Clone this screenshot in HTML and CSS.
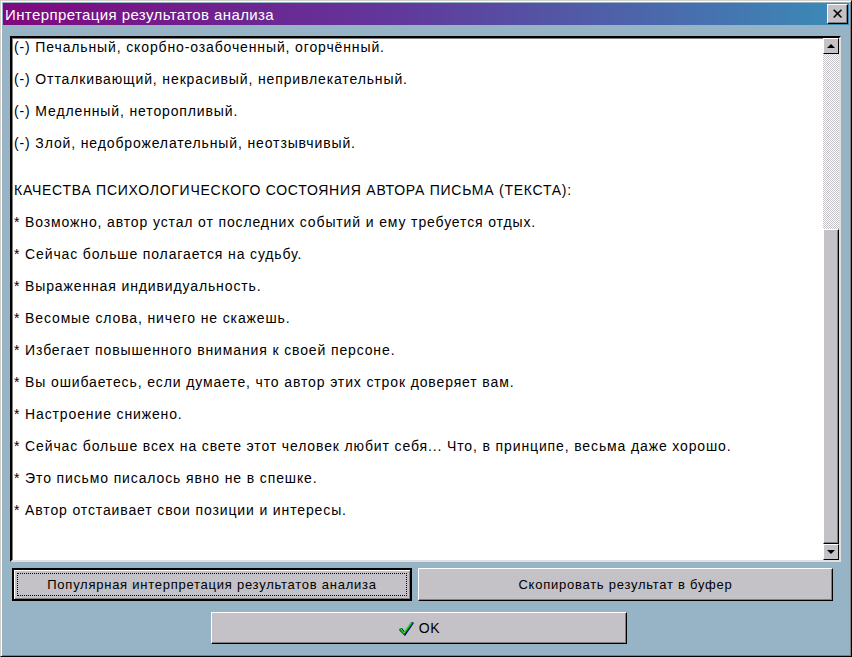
FILE: index.html
```html
<!DOCTYPE html>
<html lang="ru">
<head>
  <meta charset="UTF-8" />
  <title>Интерпретация результатов анализа</title>
  <link rel="stylesheet" href="styles.css">
</head>
<body>

  <div class="window">
    <div class="titlebar">
      <span class="title">Интерпретация результатов анализа</span>
      <button class="close-btn">&#10005;</button>
    </div>

    <div class="client">
      <div class="textbox">
        <div class="text">
          <p>(-) Печальный, скорбно-озабоченный, огорчённый.</p>
          <p>(-) Отталкивающий, некрасивый, непривлекательный.</p>
          <p>(-) Медленный, неторопливый.</p>
          <p>(-) Злой, недоброжелательный, неотзывчивый.</p>
          <p class="heading">КАЧЕСТВА ПСИХОЛОГИЧЕСКОГО СОСТОЯНИЯ АВТОРА ПИСЬМА (ТЕКСТА):</p>
          <p>* Возможно, автор устал от последних событий и ему требуется отдых.</p>
          <p>* Сейчас больше полагается на судьбу.</p>
          <p>* Выраженная индивидуальность.</p>
          <p>* Весомые слова, ничего не скажешь.</p>
          <p>* Избегает повышенного внимания к своей персоне.</p>
          <p>* Вы ошибаетесь, если думаете, что автор этих строк доверяет вам.</p>
          <p>* Настроение снижено.</p>
          <p>* Сейчас больше всех на свете этот человек любит себя... Что, в принципе, весьма даже хорошо.</p>
          <p>* Это письмо писалось явно не в спешке.</p>
          <p>* Автор отстаивает свои позиции и интересы.</p>
        </div>
        <div class="scrollbar">
          <div class="sb-btn"><span class="arrow-up"></span></div>
          <div class="sb-track"></div>
          <div class="sb-thumb"></div>
          <div class="sb-btn"><span class="arrow-down"></span></div>
        </div>
      </div>

      <div class="button-row">
        <button class="btn btn-default"><span class="focus">Популярная интерпретация результатов анализа</span></button>
        <button class="btn btn-copy">Скопировать результат в буфер</button>
      </div>

      <div class="ok-row">
        <button class="btn btn-ok">
          <svg class="check" width="17" height="16" viewBox="0 0 17 16">
            <path d="M1 9 L4 7 L7 11 L14 1 L16 2 L7 15 Z" fill="#000080"/>
            <path d="M1 8 L3 7 L6 11 L13 1 L15 2 L6 14 Z" fill="#00a000"/>
            <path d="M3 8 L6 12 L13 2" fill="none" stroke="#40e040" stroke-width="1"/>
          </svg>
          <span>OK</span>
        </button>
      </div>
    </div>
  </div>

</body>
</html>
```

FILE: styles.css
```css
* {
  box-sizing: border-box;
}

body {
  margin: 0;
  background: #96b4c6;
  font-family: 'Liberation Sans', Arial, sans-serif;
}

.window {
  width: 852px;
  height: 657px;
  border: 1px solid;
  border-color: #d4d0c8 #000 #000 #d4d0c8;
  padding: 2px;
  background: #96b4c6;
  box-shadow: inset 1px 1px #fff, inset -1px -1px #808080;
}

.titlebar {
  height: 22px;
  display: flex;
  align-items: center;
  justify-content: space-between;
  padding: 0 1px 0 2px;
  background: linear-gradient(to right, #80087f, #62369a 45%, #3a8cb8);
}

.title {
  color: #fff;
  font-size: 15px;
  letter-spacing: 0.4px;
}

.close-btn {
  width: 21px;
  height: 20px;
  padding: 0;
  border: 1px solid;
  border-color: #fff #000 #000 #fff;
  box-shadow: inset -1px -1px #808080;
  background: #c4c2c6;
  color: #000;
  font-size: 15px;
  font-weight: bold;
  line-height: 15px;
  font-family: 'DejaVu Sans', sans-serif;
}

.client {
  padding: 11px 8px 0 7px;
}

.textbox {
  height: 526px;
  display: flex;
  background: #fff;
  border: 2px solid;
  border-color: #000 #e0e0e0 #e0e0e0 #000;
  box-shadow: inset 1px 1px #808080;
}

.text {
  flex: 1;
  padding: 1px 2px;
  font-size: 14px;
  letter-spacing: 0.87px;
  color: #000;
}

.text p {
  margin: 0 0 16px 0;
  line-height: 16px;
}

.text p.heading {
  margin-top: 31px;
  letter-spacing: 0.75px;
}

.scrollbar {
  width: 16px;
  display: flex;
  flex-direction: column;
}

.sb-btn {
  height: 16px;
  display: flex;
  align-items: center;
  justify-content: center;
  background: #c4c2c6;
  border: 1px solid;
  border-color: #fff #000 #000 #fff;
}

.arrow-up {
  border-left: 4px solid transparent;
  border-right: 4px solid transparent;
  border-bottom: 4px solid #000;
}

.arrow-down {
  border-left: 4px solid transparent;
  border-right: 4px solid transparent;
  border-top: 4px solid #000;
}

.sb-track {
  height: 175px;
  background: repeating-conic-gradient(#c4c2c6 0 25%, #fff 0 50%) 0 0 / 2px 2px;
}

.sb-thumb {
  flex: 1;
  background: #c4c2c6;
  border: 1px solid;
  border-color: #fff #000 #000 #fff;
  box-shadow: inset -1px -1px #808080;
}

.btn {
  background: #c4c2c6;
  border: 1px solid;
  border-color: #fff #000 #000 #fff;
  box-shadow: inset -1px -1px #808080;
  font-family: 'Liberation Sans', Arial, sans-serif;
  font-size: 13px;
  letter-spacing: 0.75px;
  color: #000;
  padding: 0;
}

.button-row {
  display: flex;
  gap: 6px;
  margin-top: 6px;
  padding: 0 8px 0 2px;
}

.btn-default {
  width: 400px;
  height: 33px;
  border: 2px solid #000;
  box-shadow: inset 1px 1px #fff, inset -1px -1px #808080;
  padding: 3px;
}

.btn-default .focus {
  display: flex;
  align-items: center;
  justify-content: center;
  height: 100%;
  border: 1px dotted #000;
}

.btn-copy {
  flex: 1;
  height: 33px;
}

.ok-row {
  margin-top: 11px;
  padding-left: 201px;
}

.btn-ok {
  width: 416px;
  height: 32px;
  display: flex;
  align-items: center;
  justify-content: center;
  gap: 4px;
  font-size: 14px;
}

.check {
  margin-top: 1px;
}
```
